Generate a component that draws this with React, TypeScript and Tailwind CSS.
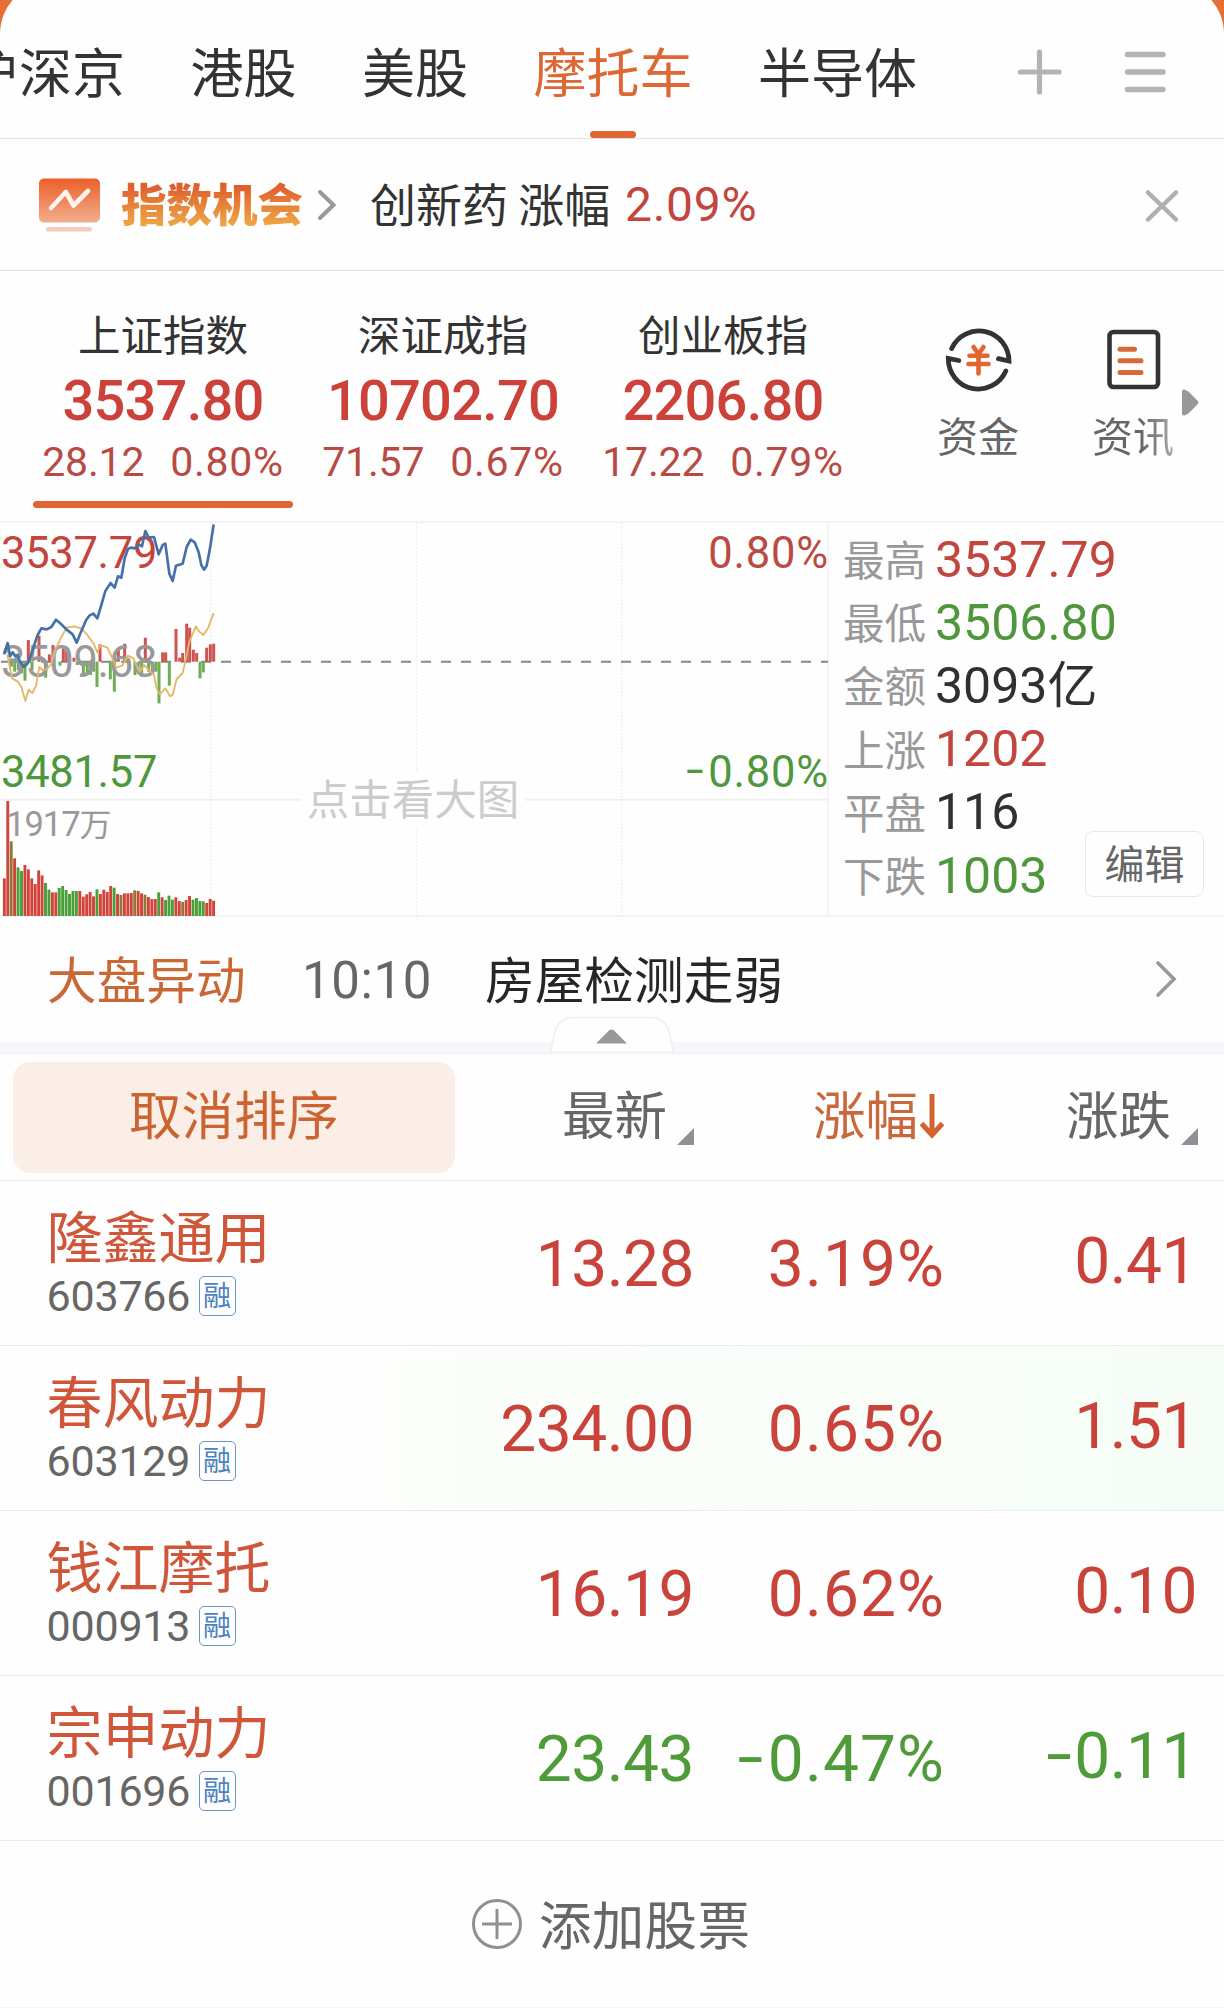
import React from "react";

const tabs = ["沪深京", "港股", "美股", "摩托车", "半导体"];

const indices = [
  { name: "上证指数", value: "3537.80", change: "28.12", percent: "0.80%" },
  { name: "深证成指", value: "10702.70", change: "71.57", percent: "0.67%" },
  { name: "创业板指", value: "2206.80", change: "17.22", percent: "0.79%" },
];

const stats = [
  { label: "最高", value: "3537.79", color: "text-[#c2453e]" },
  { label: "最低", value: "3506.80", color: "text-[#4f973c]" },
  { label: "金额", value: "3093亿", color: "text-[#303030]" },
  { label: "上涨", value: "1202", color: "text-[#c2453e]" },
  { label: "平盘", value: "116", color: "text-[#303030]" },
  { label: "下跌", value: "1003", color: "text-[#4f973c]" },
];

const stocks = [
  { name: "隆鑫通用", code: "603766", price: "13.28", percent: "3.19%", diff: "0.41", up: true },
  { name: "春风动力", code: "603129", price: "234.00", percent: "0.65%", diff: "1.51", up: true, flash: true },
  { name: "钱江摩托", code: "000913", price: "16.19", percent: "0.62%", diff: "0.10", up: true },
  { name: "宗申动力", code: "001696", price: "23.43", percent: "-0.47%", diff: "-0.11", up: false },
];

// Chart series are stored at 3x, relative to the chart's top left corner
const pricePoints =
  "12,400 23,366 30,406 38,394 46,406 52,402 60,422 72,438 84,426 96,394 104,368 112,344 124,322 140,325 154,318 168,296 180,306 200,326 218,340 230,365 240,340 258,298 268,284 280,278 292,292 304,252 316,210 332,186 344,200 354,166 364,170 374,112 384,84 392,80 404,82 416,70 426,76 436,30 446,50 462,48 476,100 488,72 496,68 508,158 518,180 528,134 548,128 560,78 572,56 584,64 596,94 604,132 612,146 620,134 630,82 641,10";

const leadPoints =
  "22,400 36,472 54,482 64,498 76,540 86,506 97,516 108,494 118,438 128,448 140,444 154,430 168,382 186,344 200,320 222,316 244,322 262,342 282,370 292,394 302,372 322,380 336,408 348,440 366,434 384,404 400,412 412,440 420,452 432,432 450,450 462,462 470,502 480,520 496,502 510,526 518,522 530,474 548,456 558,412 568,362 588,316 598,332 610,342 624,322 641,276";

// [x, length], positive is above the base line
const strength = [
  [34, -15], [44, -30], [55, -25], [65, -35], [75, -57], [85, 65], [96, -25], [117, 78],
  [137, -48], [148, 22], [159, 50], [180, -12], [190, 40], [200, 34], [222, 12], [232, -10],
  [250, -42], [262, -35], [272, -40], [281, -30], [291, -76], [300, 52], [331, -53], [343, -90],
  [355, 35], [374, 54], [385, 10], [405, -40], [425, -45], [436, 72], [446, -30], [458, -38],
  [468, -30], [477, -125], [488, 28], [497, 28], [508, -72], [528, 98], [539, 12], [548, 26],
  [560, 114], [569, 102], [580, 36], [590, 26], [600, -50], [610, -32], [620, 42], [631, 52], [641, 54],
];

const volumes =
  "r113 r345 o224 r173 g146 g135 r153 r140 r113 r96 r137 r122 g99 g79 r71 r71 g84 g90 g78 g66 g75 g75 r75 r58 r65 r72 r59 g80 r66 r79 r72 r90 g85 r66 o63 r68 r68 r69 o77 r75 r68 o64 r57 r51 r51 g71 r56 g48 g61 g49 r56 r45 o42 r48 r60 g49 g54 g45 g44 r39 r51 r46".split(" ");

const volumeColors: Record<string, string> = { r: "#d1433b", g: "#4a9f38", o: "#8a7a38" };

const Signed: React.FC<{ text: string }> = ({ text }) =>
  text.startsWith("-") ? (
    <>
      <span className="inline-block origin-right -translate-x-[3px] -translate-y-[2px] scale-x-[1.45]">-</span>
      {text.slice(1)}
    </>
  ) : (
    <>{text}</>
  );

const Header: React.FC = () => (
  <header className="-mt-[18px] flex h-[157px] items-center rounded-t-[52px] border-b border-[#e2e2e2] bg-[#fefefe] pt-[18px]">
    <nav className="-ml-[34px] flex h-full w-[1051px] shrink-0 gap-[65.5px] text-[53px] leading-[141px] text-[#333]">
      {tabs.map((tab) => (
        <div key={tab} className={tab === "摩托车" ? "relative shrink-0 text-[#dd6833]" : "shrink-0"}>
          {tab}
          {tab === "摩托车" && (
            <span className="absolute bottom-0 left-1/2 h-[7px] w-[46px] -translate-x-1/2 rounded-full bg-[#df6531]" />
          )}
        </div>
      ))}
    </nav>
    <svg className="mt-[6px] h-[46px] w-[46px] shrink-0" viewBox="0 0 46 46" stroke="#b3b3b3" strokeWidth="5.2" strokeLinecap="round">
      <path d="M3.5 23h38.5M22.5 3v40" />
    </svg>
    <svg className="mt-[6px] ml-[60px] h-[46px] w-[44px] shrink-0" viewBox="0 0 44 46" stroke="#b3b3b3" strokeWidth="5.4" strokeLinecap="round">
      <path d="M4.5 5.500h35.500M4.500 23h35.500M4.500 40.500h35.500" />
    </svg>
  </header>
);

const Banner: React.FC = () => (
  <section className="flex h-[132px] items-center border-b border-[#e2e2e2] pl-[38px] text-[46px] leading-[60px] text-[#333]">
    <svg className="h-[54px] w-[63px] shrink-0" viewBox="0 0 63 54" fill="none">
      <defs>
        <linearGradient id="board" x1="0" y1="0" x2="0" y2="1">
          <stop offset="0" stopColor="#ec5f2a" />
          <stop offset="1" stopColor="#f2ae8d" />
        </linearGradient>
      </defs>
      <rect x="1" y="0.5" width="61" height="44" rx="5" fill="url(#board)" />
      <path d="M13 30l14.8-16 7.7 13.500L50 13" stroke="#fff3ec" strokeWidth="4.6" strokeLinecap="round" strokeLinejoin="round" />
      <rect x="8" y="49" width="46" height="4.5" rx="2.2" fill="#f0cbbb" />
    </svg>
    <span className="-mt-[6px] ml-[20px] w-[183px] shrink-0 bg-gradient-to-b from-[#df5f2f] from-25% to-[#eda845] to-90% bg-clip-text text-[45.5px] font-black text-transparent">
      指数机会
    </span>
    <svg className="ml-[13px] h-[32px] w-[20px] shrink-0" viewBox="0 0 20 32" fill="none" stroke="#999" strokeWidth="4" strokeLinecap="round">
      <path d="M3 3l13.5 13L3 29" />
    </svg>
    <p className="-mt-[5px] ml-[33px] w-[255px] shrink-0 whitespace-pre">创新药 涨幅</p>
    <span className="mt-[1px] w-[518px] font-['Roboto'] text-[48px] tracking-[0.7px] text-[#c2453e]">2.09%</span>
    <svg className="mt-[2px] h-[36px] w-[38px]" viewBox="0 0 38 36" stroke="#b0b0b0" strokeWidth="4.5" strokeLinecap="round">
      <path d="M5 4.500l28 27M33 4.500l-28 27" />
    </svg>
  </section>
);

const Indices: React.FC = () => (
  <section className="flex h-[250px] pl-[23px]">
    {indices.map((item, i) => (
      <div key={item.name} className="flex w-[280px] shrink-0 flex-col items-center pt-[38px]">
        <h3 className="text-[42.5px] leading-[48px] text-[#333]">{item.name}</h3>
        <p className="mt-[15.5px] font-['Roboto'] text-[56px] leading-[56px] font-medium tracking-[-0.8px] text-[#cc423a]">
          {item.value}
        </p>
        <p className="mt-[12px] flex gap-[26px] font-['Roboto'] text-[41px] leading-[42px] text-[#b94a43]">
          <span className="tracking-[-0.2px]">{item.change}</span>
          <span className="tracking-[0.7px]">{item.percent}</span>
        </p>
        {i === 0 && <span className="mt-[18px] h-[7px] w-[260px] rounded-full bg-[#e06634]" />}
      </div>
    ))}
    <div className="ml-[62px] flex w-[106px] shrink-0 flex-col items-center pt-[52px] text-[41px] leading-[48px] text-[#666]">
      <svg className="h-[69px] w-[69px]" viewBox="0 0 69 69" fill="none" strokeLinecap="round">
        <g stroke="#333" strokeWidth="4.8">
          <path d="M7.700 25.500A30 30 0 0 1 65 38l-10.5-2.300" />
          <path d="M61.800 48A30 30 0 0 1 4.300 35.500l10.5 2" />
        </g>
        <path d="M29.5 24l5 7 5-7M25.500 32.800h18M24.500 41h20M34.500 32v18.500" stroke="#e5652f" strokeWidth="4.6" />
      </svg>
      <span className="mt-[18px]">资金</span>
    </div>
    <div className="ml-[49px] flex w-[106px] shrink-0 flex-col items-center pt-[54px] text-[41px] leading-[48px]">
      <svg className="h-[69px] w-[69px]" viewBox="0 0 69 69" fill="none">
        <rect x="10.5" y="7" width="48.500" height="55" rx="4" stroke="#333" strokeWidth="4.6" />
        <path d="M21 24.200h14.500M21 35.800h21M21 47.500h21" stroke="#d56a3b" strokeWidth="5" strokeLinecap="round" />
      </svg>
      <span className="mt-[16px] bg-gradient-to-r from-[#666] from-60% to-[#aaa] bg-clip-text text-transparent">资讯</span>
    </div>
    <svg className="mt-[117px] -ml-[5px] h-[29px] w-[19px] shrink-0" viewBox="0 0 19 29" fill="#999" stroke="#999" strokeWidth="4" strokeLinejoin="round">
      <path d="M3 3.500v22l3-1.500 9.500-9.500L6 5z" />
    </svg>
  </section>
);

const Chart: React.FC = () => (
  <div className="relative -mt-[2px] h-[396px] w-[829px] shrink-0 font-['Roboto','Noto_Sans_CJK_SC'] text-[43.5px] leading-[44px]">
    <svg className="absolute inset-0 h-[396px] w-[829px]" viewBox="0 0 829 396" fill="none">
      <path d="M210.500 2v394M416.500 2v394M622 2v394" stroke="#ececec" strokeWidth="1.3" strokeDasharray="1.5 2" />
      <path d="M1 278.700h828" stroke="#f0f0f0" strokeWidth="2" />
      <path d="M828 2v394" stroke="#f2f2f2" strokeWidth="1.5" />
      <path d="M1 140.700h827" stroke="#888" strokeWidth="2" strokeDasharray="10 10" />
      {volumes.map((bar, i) => {
        const height = Number(bar.slice(1)) / 3;
        return (
          <rect key={i} x={2.9 + i * 3.43} y={395 - height} width="2.9" height={height} fill={volumeColors[bar[0]]} />
        );
      })}
      {strength.map(([x, len]) => (
        <rect
          key={x}
          x={x / 3 - 1.5}
          y={len > 0 ? 140.7 - len / 3 : 140.7}
          width="3"
          height={Math.abs(len) / 3}
          fill={len > 0 ? "#cd5450" : "#6fae55"}
        />
      ))}
    </svg>
    <span className="absolute top-[11px] left-[1px] tracking-[-0.3px] text-[#c2453e]">3537.79</span>
    <span className="absolute top-[120px] left-[1px] tracking-[-0.3px] text-[#999]">3509.68</span>
    <span className="absolute top-[230px] left-[1px] tracking-[-0.3px] text-[#4f973c]">3481.57</span>
    <span className="absolute top-[281px] left-[6px] text-[34.5px] tracking-[-1px] text-[#999]">
      1917<span className="text-[32px]">万</span>
    </span>
    <span className="absolute top-[11px] right-[0px] tracking-[0.8px] text-[#bb4a42]">0.80%</span>
    <span className="absolute top-[230px] right-[0px] tracking-[0.8px] text-[#4f973c]">
      <Signed text="-0.80%" />
    </span>
    <span className="absolute top-[251px] left-[301px] h-[55px] w-[224px] bg-[#fefefe] text-center font-['Noto_Sans_CJK_SC'] text-[42.5px] leading-[50px] text-[#ccc]">
      点击看大图
    </span>
    <svg className="absolute inset-0 h-[396px] w-[829px]" viewBox="0 0 2487 1188" fill="none" strokeLinejoin="round">
      <polyline points={leadPoints} stroke="#e5b763" strokeWidth="5.5" />
      <polyline points={pricePoints} stroke="#4671a8" strokeWidth="8" />
    </svg>
  </div>
);

const Stats: React.FC = () => (
  <div className="flex pt-[5px] pl-[14px]">
    <dl className="w-[242px] shrink-0">
      {stats.map((item) => (
        <div key={item.label} className="flex h-[63.2px] items-center whitespace-nowrap">
          <dt className="w-[92px] shrink-0 text-[41.5px] leading-[52px] text-[#999]">
            <span className="block pb-[3px]">{item.label}</span>
          </dt>
          <dd className={`shrink-0 font-['Roboto','Noto_Sans_CJK_SC'] text-[50px] leading-[56px] ${item.color}`}>
            {item.value}
          </dd>
        </div>
      ))}
    </dl>
    <button className="mt-[303px] h-[66px] w-[119px] shrink-0 rounded-[8px] border border-[#e9e9e9] pb-[4px] text-[40px] leading-[60px] text-[#666]">
      编辑
    </button>
  </div>
);

const News: React.FC = () => (
  <section className="relative flex h-[138px] border-b-[13px] border-[#f6f7fa] pl-[47px] text-[49.7px] leading-[121px]">
    <span className="w-[255px] text-[#c96735]">大盘异动</span>
    <span className="w-[183px] pt-[3px] font-['Roboto'] text-[51px] tracking-[0.6px] text-[#666]">10:10</span>
    <span className="w-[669px] text-[#262626]">房屋检测走弱</span>
    <svg className="mt-[42px] h-[40px] w-[24px]" viewBox="0 0 24 40" fill="none" stroke="#999" strokeWidth="3.6" strokeLinecap="round">
      <path d="M4 4l16 16L4 36" />
    </svg>
    <svg className="absolute top-[99px] left-[548px] h-[39px] w-[128px]" viewBox="0 0 128 39">
      <path d="M2.500 36L7 16Q11 1.500 25 1.500H103Q117 1.500 121 16l4.500 20z" fill="#fefefe" stroke="#efefef" strokeWidth="1.5" />
      <path d="M48 27.500L61 14.500q2.500-2 5 0L79 27.500z" fill="#999" />
    </svg>
  </section>
);

const Corner: React.FC = () => (
  <svg className="mt-[73px] ml-[10px] h-[17px] w-[17px]" viewBox="0 0 17 17">
    <path d="M17 0v17H0z" fill="#8f8f96" />
  </svg>
);

const TableHead: React.FC = () => (
  <div className="grid h-[126px] grid-cols-[455px_239px_251px_253px] border-b border-[#ececec] text-[52.5px] leading-[115px] text-[#666]">
    <button className="mt-[7px] ml-[13px] h-[111px] rounded-[17px] bg-[#faeee7] pb-[11px] leading-[100px] text-[#cb6431]">
      取消排序
    </button>
    <div className="flex justify-end">
      最新
      <Corner />
    </div>
    <div className="flex justify-end text-[#c9683a]">
      涨幅
      <svg className="mt-[38px] ml-[1px] h-[48px] w-[26px]" viewBox="0 0 26 48" fill="none" stroke="#d2622e" strokeWidth="5">
        <path d="M13 1v40M2.500 30.500L13 42l10.500-11.500" />
      </svg>
    </div>
    <div className="flex justify-end">
      涨跌
      <Corner />
    </div>
  </div>
);

const StockList: React.FC = () => (
  <ul>
    {stocks.map((stock) => (
      <li
        key={stock.code}
        className={`grid h-[165px] grid-cols-[455px_239px_251px_252px] border-b border-[#ebebeb] ${
          stock.flash ? "bg-gradient-to-r from-[#fefefe] from-10% to-[#f6fdf6]" : ""
        }`}
      >
        <div className="pt-[25px] pl-[46.5px]">
          <h4 className="text-[56px] leading-[56px] text-[#cf5638]">{stock.name}</h4>
          <div className="mt-[12px] flex h-[44px] items-center">
            <span className="w-[152px] font-['Roboto'] text-[43px] leading-[44px] tracking-[-0.2px] text-[#666]">{stock.code}</span>
            <span className="h-[40px] w-[37px] rounded-[5px] border-[1.5px] border-[#6b95c5] text-center text-[28px] leading-[35px] text-[#4d82c0]">
              融
            </span>
          </div>
        </div>
        <div
          className={`col-span-3 grid grid-cols-subgrid text-right font-['Roboto'] text-[64px] leading-[167px] ${
            stock.up ? "text-[#c9433b]" : "text-[#4f9b39]"
          }`}
        >
          <span className="tracking-[-0.5px]">{stock.price}</span>
          <span className="tracking-[1.1px]">
            <Signed text={stock.percent} />
          </span>
          <span className="leading-[161px] tracking-[-0.5px]">
            <Signed text={stock.diff} />
          </span>
        </div>
      </li>
    ))}
  </ul>
);

const App: React.FC = () => {
  return (
    <div className="h-[2008px] w-[1224px] overflow-hidden bg-[#e66f35] font-['Noto_Sans_CJK_SC','Noto_Sans',sans-serif]">
      <Header />
      <main className="h-[1869px] bg-[#fefefe]">
        <Banner />
        <Indices />
        <section className="flex h-[396px] border-y-2 border-[#f3f3f3]">
          <Chart />
          <Stats />
        </section>
        <News />
        <TableHead />
        <StockList />
        <button className="flex h-[167px] w-full items-center border-b border-[#f4f4f4] pl-[471px] text-[52.5px] text-[#666]">
          <svg className="h-[52px] w-[52px]" viewBox="0 0 52 52" fill="none" stroke="#8f8f96" strokeWidth="3">
            <circle cx="26" cy="26" r="23.5" />
            <path d="M11 26h30M26 11v30" />
          </svg>
          <span className="ml-[16px] pb-[5px] leading-[60px] tracking-[0.3px]">添加股票</span>
        </button>
      </main>
    </div>
  );
};

export default App;
